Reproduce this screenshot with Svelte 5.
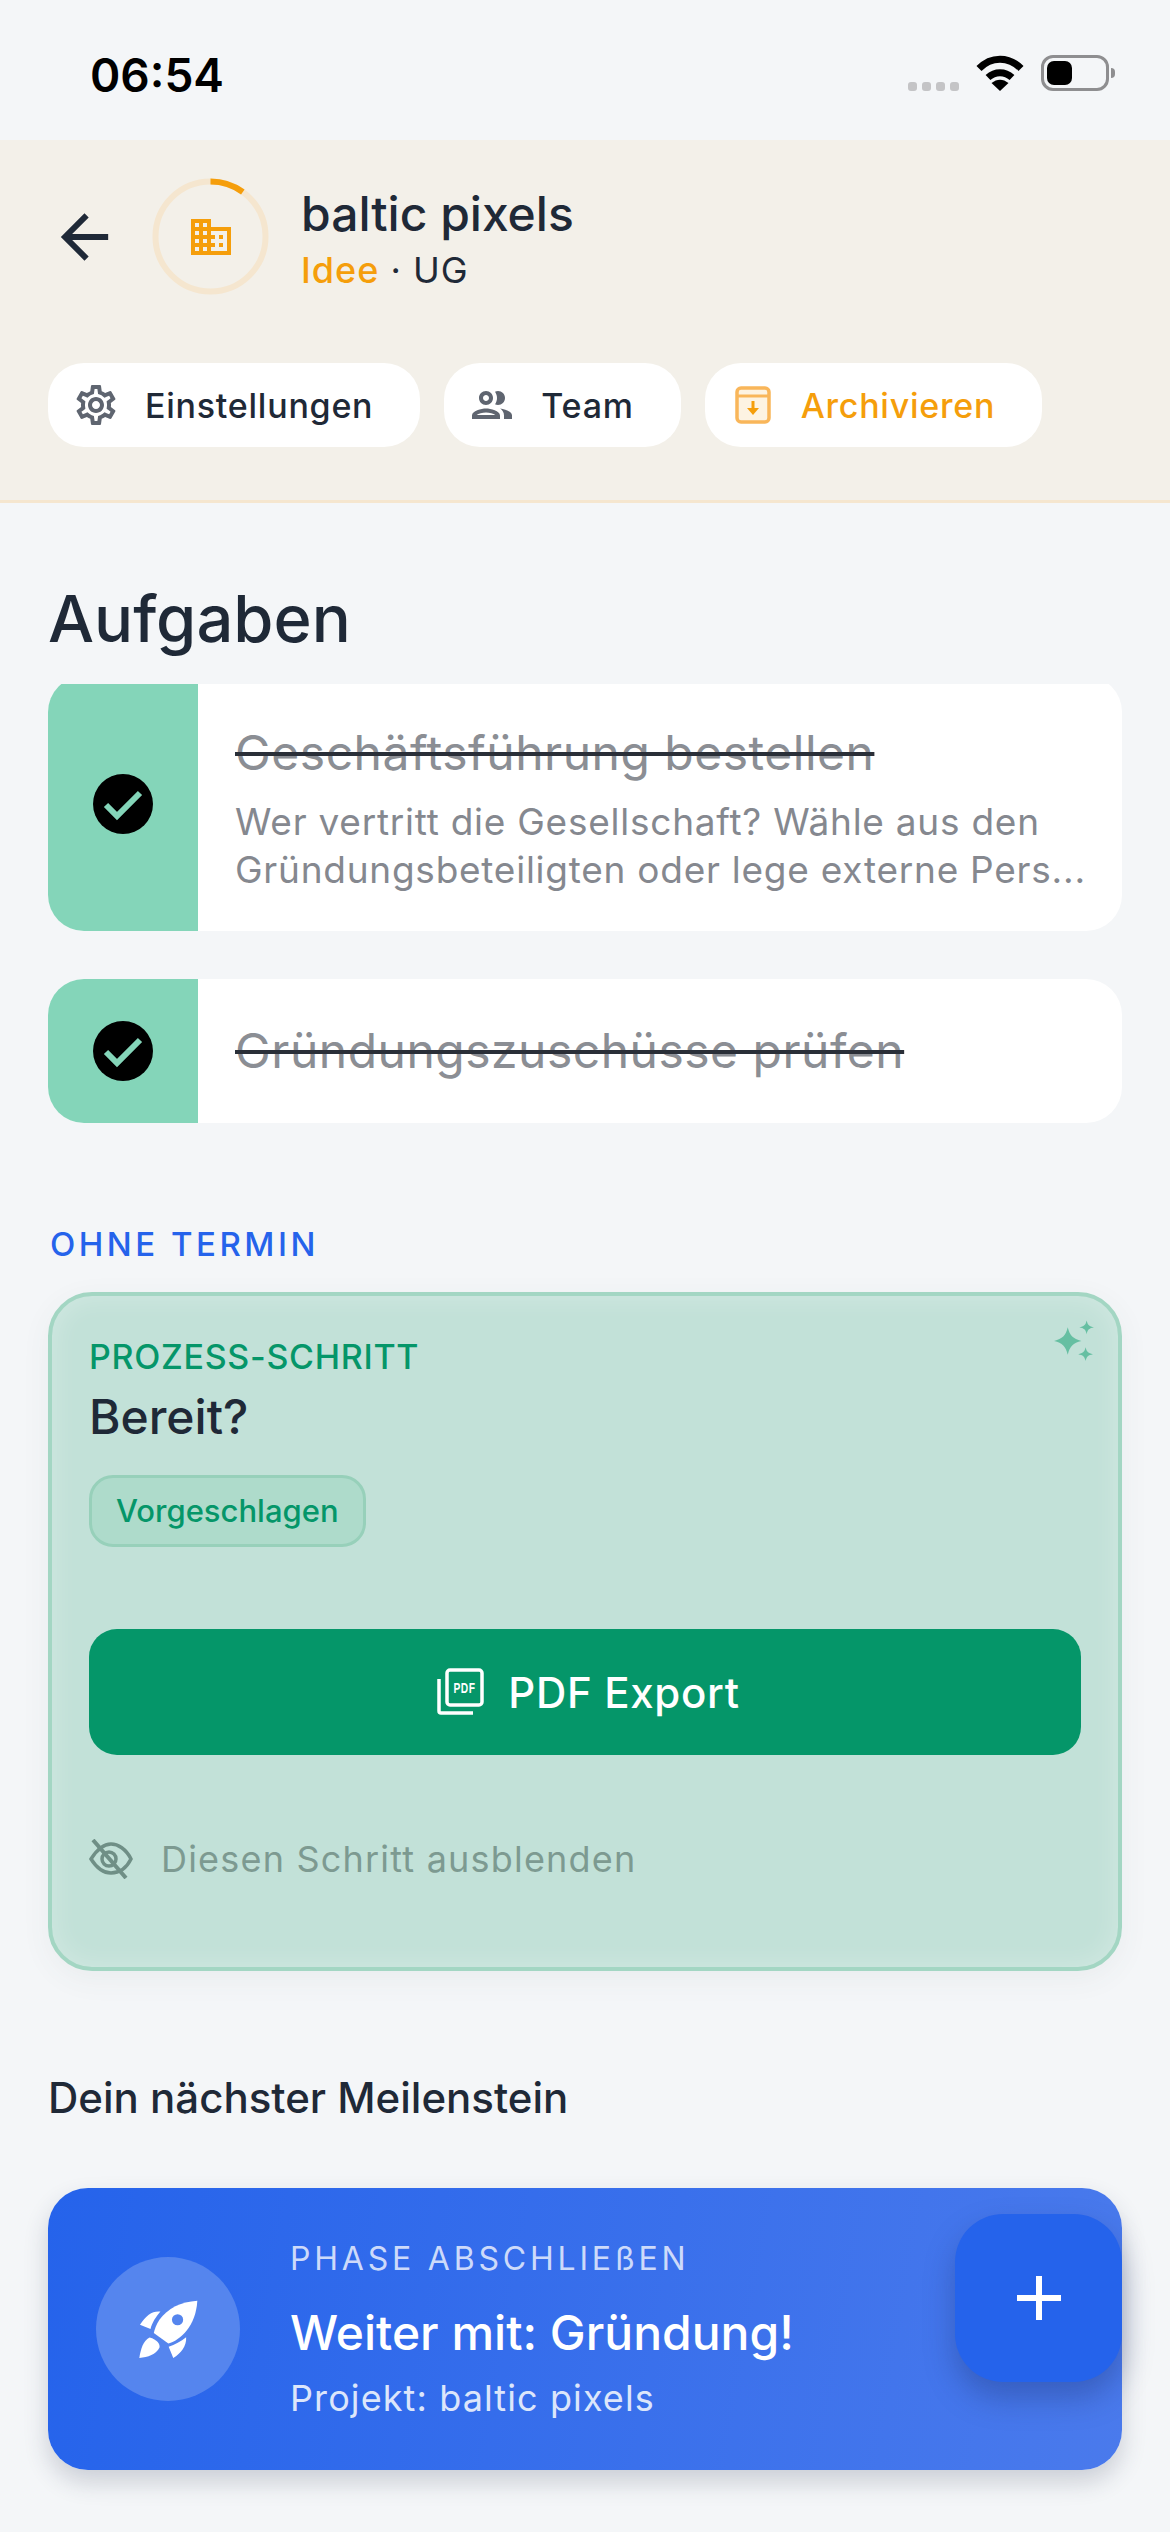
<script>
	const pills = [
		{ label: 'Einstellungen', icon: 'gear' },
		{ label: 'Team', icon: 'team' },
		{ label: 'Archivieren', icon: 'archive' }
	];
	const tasks = [
		{
			title: 'Geschäftsführung bestellen',
			text: 'Wer vertritt die Gesellschaft? Wähle aus den Gründungsbeteiligten oder lege externe Pers...'
		},
		{ title: 'Gründungszuschüsse prüfen' }
	];
</script>

<div class="page">
	<div class="status">
		<span class="time">06:54</span>
		<div class="status-icons">
			<div class="dots"><i></i><i></i><i></i><i></i></div>
			<svg class="wifi" viewBox="0 0 48 36" width="48" height="36">
				<path d="M3 13.5C15 1 33 1 45 13.5" fill="none" stroke="#000" stroke-width="7" />
				<path d="M12 22.5C19 16 29 16 36 22.5" fill="none" stroke="#000" stroke-width="7" />
				<path d="M15.5 28C21 23.500 27 23.500 32.500 28L24 36Z" fill="#000" />
			</svg>
			<div class="battery"><b></b></div>
			<div class="nub"></div>
		</div>
	</div>

	<header class="head">
		<div class="project">
			<svg class="back" viewBox="0 0 24 24" width="72" height="72">
				<path d="M20 11H7.830l5.590-5.590L12 4l-8 8 8 8 1.410-1.410L7.830 13H20v-2z" fill="#1f2937" />
			</svg>
			<div class="ring">
				<svg viewBox="0 0 117 117" width="117" height="117">
					<circle cx="58.500" cy="58.500" r="55" fill="none" stroke="#f5e6cf" stroke-width="6" />
					<path d="M58.500 3.500A55 55 0 0 1 90.800 14" fill="none" stroke="#f59e0b" stroke-width="6" />
				</svg>
				<svg class="domain" viewBox="0 0 24 24" width="48" height="48">
					<path fill="#f59e0b" d="M12 7V3H2v18h20V7H12zM6 19H4v-2h2v2zm0-4H4v-2h2v2zm0-4H4V9h2v2zm0-4H4V5h2v2zm4 12H8v-2h2v2zm0-4H8v-2h2v2zm0-4H8V9h2v2zm0-4H8V5h2v2zm10 12h-8v-2h2v-2h-2v-2h2v-2h-2V9h8v10zm-2-8h-2v2h2v-2zm0 4h-2v2h2v-2z" />
				</svg>
			</div>
			<div class="names">
				<div class="name">baltic pixels</div>
				<div class="sub"><span class="phase">Idee</span> · UG</div>
			</div>
		</div>
		<div class="pills">
			{#each pills as pill}
				<button class="pill" class:warn={pill.icon === 'archive'}>
					{#if pill.icon === 'gear'}
						<svg viewBox="0 0 24 24" width="48" height="48">
							<path fill="#5f6570" d="M19.430 12.980c.04-.32.07-.64.07-.98 0-.34-.03-.66-.07-.98l2.110-1.650c.19-.15.24-.42.12-.64l-2-3.460c-.09-.16-.26-.25-.44-.25-.06 0-.12.01-.17.03l-2.490 1c-.52-.4-1.080-.73-1.690-.98l-.38-2.650C14.460 2.180 14.250 2 14 2h-4c-.25 0-.46.18-.49.42l-.38 2.650c-.61.25-1.170.59-1.690.98l-2.490-1c-.06-.02-.12-.03-.18-.03-.17 0-.34.09-.43.25l-2 3.460c-.13.22-.07.49.12.64l2.110 1.650c-.04.32-.07.65-.07.98 0 .33.03.66.07.98l-2.110 1.650c-.19.15-.24.42-.12.64l2 3.460c.09.16.26.25.44.25.06 0 .12-.01.17-.03l2.490-1c.52.4 1.080.73 1.690.98l.38 2.650c.03.24.24.42.49.42h4c.25 0 .46-.18.49-.42l.38-2.650c.61-.25 1.170-.59 1.690-.98l2.490 1c.06.02.12.03.18.03.17 0 .34-.09.43-.25l2-3.460c.12-.22.07-.49-.12-.64l-2.110-1.650zm-1.980-1.710c.04.31.05.52.05.73 0 .21-.02.43-.05.73l-.14 1.130.89.7 1.080.84-.7 1.210-1.270-.51-1.040-.42-.9.68c-.43.32-.84.56-1.250.73l-1.060.43-.16 1.130-.2 1.350h-1.400l-.19-1.350-.16-1.130-1.060-.43c-.43-.18-.83-.41-1.230-.71l-.91-.7-1.060.43-1.270.51-.7-1.210 1.080-.84.89-.7-.14-1.130c-.03-.31-.05-.54-.05-.74s.02-.43.05-.73l.14-1.130-.89-.7-1.080-.84.7-1.210 1.270.51 1.040.42.9-.68c.43-.32.84-.56 1.250-.73l1.060-.43.16-1.130.2-1.350h1.390l.19 1.350.16 1.130 1.060.43c.43.18.83.41 1.230.71l.91.7 1.060-.43 1.270-.51.7 1.210-1.070.85-.89.7.14 1.130zM12 8c-2.210 0-4 1.790-4 4s1.790 4 4 4 4-1.790 4-4-1.790-4-4-4zm0 6c-1.100 0-2-.9-2-2s.9-2 2-2 2 .9 2 2-.9 2-2 2z" />
						</svg>
					{:else if pill.icon === 'team'}
						<svg viewBox="0 0 24 24" width="48" height="48">
							<path fill="#5f6570" d="M9 13.750c-2.340 0-7 1.170-7 3.500V19h14v-1.750c0-2.330-4.660-3.500-7-3.500zM4.340 17c.84-.58 2.870-1.250 4.660-1.250s3.820.67 4.660 1.250H4.340zM9 12c1.930 0 3.500-1.570 3.500-3.500S10.930 5 9 5 5.500 6.570 5.500 8.500 7.070 12 9 12zm0-5c.83 0 1.500.67 1.500 1.500S9.830 10 9 10s-1.500-.67-1.500-1.500S8.170 7 9 7zm7.040 6.810c1.160.84 1.960 1.960 1.960 3.440V19h4v-1.750c0-2.020-3.500-3.170-5.960-3.440zM15 12c1.930 0 3.500-1.570 3.500-3.500S16.930 5 15 5c-.54 0-1.040.13-1.500.35.63.89 1 1.980 1 3.150s-.37 2.260-1 3.150c.46.22.96.35 1.500.35z" />
						</svg>
					{:else}
						<svg viewBox="0 0 36 38" width="36" height="38">
							<rect x="2" y="2" width="32" height="34" rx="4" fill="#fdf3e2" stroke="#f9b65a" stroke-width="3.500" />
							<path d="M2 10H34" stroke="#f9b65a" stroke-width="3" />
							<path d="M18 15V24" stroke="#f59e0b" stroke-width="3" />
							<path d="M12 22H24L18 29Z" fill="#f59e0b" />
						</svg>
					{/if}
					<span>{pill.label}</span>
				</button>
			{/each}
		</div>
	</header>

	<main class="content">
		<h1>Aufgaben</h1>
		<div class="tasks">
			{#each tasks as task}
				<div class="task">
					<div class="done">
						<svg viewBox="0 0 60 60" width="60" height="60">
							<circle cx="30" cy="30" r="30" fill="#000" />
							<path d="M13 31L24 42L47 19" fill="none" stroke="#84d5b9" stroke-width="6" />
						</svg>
					</div>
					<div class="task-body">
						<div class="task-title">{task.title}</div>
						{#if task.text}
							<div class="task-text">{task.text}</div>
						{/if}
					</div>
				</div>
			{/each}
		</div>

		<div class="section">OHNE TERMIN</div>

		<section class="step">
			<svg class="sparkle" viewBox="0 0 40 40" width="42" height="42">
				<path fill="#66bfa2" d="M15 7C17 15 20 18 28 20C20 22 17 25 15 33C13 25 10 22 2 20C10 18 13 15 15 7Z" />
				<path fill="#66bfa2" d="M33 0.500C34 5 35.500 6 40 7C35.500 8 34 9 33 13.500C32 9 30.500 8 26 7C30.500 6 32 5 33 0.500Z" />
				<path fill="#66bfa2" d="M32 26C33 30.500 34.500 31.500 39 32.500C34.500 33.500 33 34.500 32 39C31 34.500 29.500 33.500 25 32.500C29.500 31.500 31 30.500 32 26Z" />
			</svg>
			<div class="step-label">PROZESS-SCHRITT</div>
			<div class="step-title">Bereit?</div>
			<div class="badge">Vorgeschlagen</div>
			<button class="export">
				<svg viewBox="0 0 48 48" width="48" height="48">
					<rect x="11" y="2" width="35" height="35" rx="3" fill="none" stroke="#fff" stroke-width="3.500" />
					<path d="M3 11V43C3 44.500 3.500 45 5 45H37" fill="none" stroke="#fff" stroke-width="3.500" />
					<text x="17.500" y="25" textLength="22" lengthAdjust="spacingAndGlyphs" class="pdf">PDF</text>
				</svg>
				<span>PDF Export</span>
			</button>
			<div class="hide">
				<svg viewBox="0 0 44 40" width="44" height="40">
					<path d="M2 20C9 9 16 5 22 5C29 5 37 10 42 20C37 30 29 34 22 34C16 34 9 31 2 20Z" fill="none" stroke="#6f8f86" stroke-width="3.500" />
					<circle cx="20" cy="20" r="7" fill="none" stroke="#6f8f86" stroke-width="3.500" />
					<path d="M4 1L37 39" stroke="#6f8f86" stroke-width="4" />
				</svg>
				<span>Diesen Schritt ausblenden</span>
			</div>
		</section>

		<h2>Dein nächster Meilenstein</h2>

		<div class="milestone">
			<div class="rocket">
				<svg viewBox="170 178 182 180" width="60" height="60">
					<path fill="#fff" d="M350 182C300 185 260 205 235 240C225 255 220 270 218 280L262 312C300 300 345 260 350 182Z" />
					<circle cx="290" cy="240" r="17" fill="#5585ee" />
					<path fill="#fff" d="M238 215C215 212 195 225 176 255L208 268C212 250 225 230 238 215Z" />
					<path fill="#fff" d="M316 293C318 320 300 342 277 356L263 322C282 316 300 305 316 293Z" />
					<path fill="#fff" d="M205 294C185 305 178 330 174 356C200 354 225 345 235 325C238 315 228 300 205 294Z" />
				</svg>
			</div>
			<div class="milestone-text">
				<div class="ms-label">PHASE ABSCHLIEßEN</div>
				<div class="ms-title">Weiter mit: Gründung!</div>
				<div class="ms-sub">Projekt: baltic pixels</div>
			</div>
			<button class="fab" aria-label="Neu">
				<svg viewBox="0 0 44 44" width="44" height="44">
					<path d="M22 0V44M0 22H44" stroke="#fff" stroke-width="6" />
				</svg>
			</button>
		</div>
	</main>
</div>

<style>
	:global(body) {
		margin: 0;
		background: #f4f6f8;
	}
	.page {
		width: 1170px;
		height: 2532px;
		overflow: hidden;
		background: #f4f6f8;
		font-family: Inter, "Noto Sans", sans-serif;
		color: #1f2937;
	}
	button {
		font-family: inherit;
		border: 0;
		cursor: pointer;
	}

	.status {
		height: 140px;
		display: flex;
		align-items: flex-start;
		justify-content: space-between;
		padding: 0 55px 0 90px;
		box-sizing: border-box;
	}
	.time {
		margin-top: 48px;
		font-size: 46px;
		line-height: 54px;
		font-weight: 600;
		color: #000;
	}
	.status-icons {
		display: flex;
		align-items: flex-start;
		margin-top: 55px;
	}
	.dots {
		display: flex;
		gap: 5px;
		margin: 27px 17px 0 0;
	}
	.dots i {
		width: 9px;
		height: 9px;
		border-radius: 3px;
		background: #c4c4c6;
	}
	.battery {
		width: 68px;
		height: 36px;
		margin-left: 17px;
		box-sizing: border-box;
		border: 3px solid #8e8e90;
		border-radius: 12px;
		padding: 3px;
	}
	.battery b {
		display: block;
		width: 25px;
		height: 24px;
		background: #000;
		border-radius: 7px;
	}
	.nub {
		width: 4px;
		height: 10px;
		margin: 13px 0 0 2px;
		background: #8e8e90;
		border-radius: 0 5px 5px 0;
	}

	.head {
		height: 363px;
		box-sizing: border-box;
		padding: 38px 48px 0;
		background: #f3f0e9;
		border-bottom: 3px solid #f5e6cf;
	}
	.project {
		display: flex;
		align-items: center;
		height: 117px;
	}
	.back {
		margin: 0 32px 0 1px;
		width: 71px;
	}
	.ring {
		position: relative;
		width: 117px;
		height: 117px;
		margin-right: 32px;
	}
	.ring svg {
		display: block;
	}
	.ring .domain {
		position: absolute;
		left: 35px;
		top: 35px;
	}
	.names {
		padding-top: 4px;
	}
	.name {
		font-size: 48px;
		line-height: 58px;
		font-weight: 500;
	}
	.sub {
		font-size: 36px;
		line-height: 44px;
		margin-top: 5px;
		letter-spacing: 1px;
	}
	.phase {
		color: #f59e0b;
		font-weight: 500;
	}
	.pills {
		display: flex;
		gap: 24px;
		margin-top: 68px;
	}
	.pill {
		height: 84px;
		display: flex;
		align-items: center;
		gap: 25px;
		padding: 0 47px 0 24px;
		background: #fff;
		border-radius: 36px;
		font-size: 34px;
		font-weight: 500;
		letter-spacing: 0.75px;
		color: #1f2937;
	}
	.pill.warn {
		color: #f59e0b;
		gap: 30px;
		padding-left: 30px;
	}

	.content {
		padding: 0 48px;
	}
	h1 {
		margin: 75px 0 0;
		font-size: 65px;
		line-height: 82px;
		font-weight: 500;
	}
	.tasks {
		overflow: hidden;
		margin-top: 24px;
	}
	.task {
		display: flex;
		background: #fff;
		border-radius: 36px;
		overflow: hidden;
		margin-bottom: 48px;
	}
	.task:first-child {
		margin-top: -8px;
	}
	.task:last-child {
		margin-bottom: 0;
	}
	.done {
		width: 150px;
		flex: none;
		background: #84d5b9;
		display: flex;
		align-items: center;
		justify-content: center;
	}
	.done svg {
		display: block;
	}
	.task-body {
		flex: 1;
		min-width: 0;
		padding: 44px 20px 44px 37px;
	}
	.task:first-child .task-body {
		padding-top: 49px;
		padding-bottom: 37px;
	}
	.task-title {
		font-size: 48px;
		line-height: 56px;
		letter-spacing: 0.5px;
		color: #8b8e94;
		text-decoration: line-through;
		text-decoration-color: #2a2f38;
		text-decoration-thickness: 4px;
	}
	.task-text {
		margin-top: 17px;
		font-size: 37px;
		line-height: 48px;
		color: #85888f;
		letter-spacing: 0.75px;
	}

	.section {
		margin: 100px 0 0 2px;
		font-size: 33px;
		line-height: 42px;
		font-weight: 500;
		letter-spacing: 3.5px;
		color: #2563eb;
	}
	.step {
		position: relative;
		margin-top: 27px;
		height: 679px;
		box-sizing: border-box;
		padding: 40px 37px 0;
		background: #c2e1d8;
		border: 4px solid #a3d6c3;
		border-radius: 44px;
		box-shadow: inset 0 0 28px rgba(255, 255, 255, 0.28), 0 8px 30px rgba(60, 90, 80, 0.06);
	}
	.sparkle {
		position: absolute;
		right: 24px;
		top: 24px;
	}
	.step-label {
		font-size: 34px;
		line-height: 42px;
		font-weight: 500;
		letter-spacing: 0.7px;
		color: #059669;
	}
	.step-title {
		margin-top: 9px;
		font-size: 48px;
		line-height: 60px;
		font-weight: 500;
	}
	.badge {
		width: fit-content;
		margin-top: 28px;
		box-sizing: border-box;
		height: 72px;
		padding: 0 24px;
		border: 3px solid #97d0ba;
		border-radius: 24px;
		background: #aedbcb;
		font-size: 31px;
		line-height: 66px;
		font-weight: 500;
		color: #059669;
	}
	.export {
		display: flex;
		align-items: center;
		justify-content: center;
		gap: 24px;
		width: 100%;
		height: 126px;
		margin-top: 82px;
		padding: 0 0 0 6px;
		background: #059669;
		border-radius: 28px;
		color: #fff;
		font-size: 42px;
		font-weight: 500;
		letter-spacing: 0.7px;
	}
	.pdf {
		font-family: "Liberation Sans", sans-serif;
		font-size: 14px;
		font-weight: 700;
		fill: #fff;
	}
	.hide {
		display: flex;
		align-items: center;
		gap: 28px;
		margin-top: 82px;
		font-size: 36px;
		line-height: 44px;
		letter-spacing: 1.2px;
		color: #7d9a91;
	}
	h2 {
		margin: 101px 0 0;
		font-size: 42px;
		line-height: 52px;
		font-weight: 500;
	}
	.milestone {
		position: relative;
		display: flex;
		align-items: center;
		margin-top: 64px;
		height: 282px;
		box-sizing: border-box;
		padding-left: 48px;
		border-radius: 40px;
		background: linear-gradient(100deg, #2563eb, #4a7aec);
		box-shadow: 0 12px 24px rgba(40, 50, 80, 0.2);
		color: #fff;
	}
	.rocket {
		width: 144px;
		height: 144px;
		flex: none;
		border-radius: 50%;
		background: #5585ee;
		display: flex;
		align-items: center;
		justify-content: center;
	}
	.milestone-text {
		margin-left: 50px;
	}
	.ms-label {
		font-size: 32px;
		line-height: 40px;
		letter-spacing: 3.8px;
		color: #cddafa;
	}
	.ms-title {
		margin-top: 24px;
		font-size: 48px;
		line-height: 60px;
		font-weight: 500;
	}
	.ms-sub {
		margin-top: 13px;
		font-size: 36px;
		line-height: 44px;
		letter-spacing: 1.1px;
		color: #dce6fb;
	}
	.fab {
		position: absolute;
		right: 0;
		top: 26px;
		width: 167px;
		height: 168px;
		border-radius: 48px;
		background: #2563eb;
		box-shadow: 0 16px 30px rgba(30, 50, 110, 0.35);
		display: flex;
		align-items: center;
		justify-content: center;
	}
</style>
